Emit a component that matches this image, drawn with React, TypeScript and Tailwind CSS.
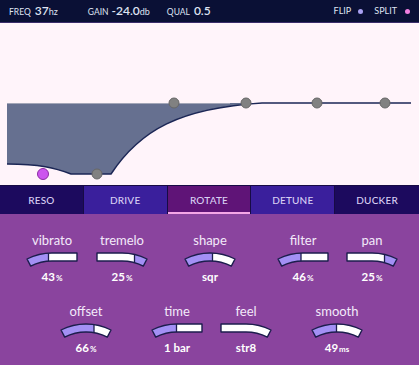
import React from "react";

type Variant = "full" | "left" | "right";

const PATHS: Record<Variant, string> = {
  full: "M1,7 A55,55 0 0 1 51,7 L47.3,14.1 A47,47 0 0 0 4.7,14.1 Z",
  left: "M1,7 A55,55 0 0 1 26,1 L51,1 L51,9 L26,9 A47,47 0 0 0 4.7,14.1 Z",
  right: "M1,1 L26,1 A55,55 0 0 1 51,7 L47.3,14.1 A47,47 0 0 0 26,9 L1,9 Z",
};

function Arc({ id, variant, pct }: { id: string; variant: Variant; pct: number }) {
  const w = pct * 50;
  const x0 = variant === "right" ? 51 - w : 1;
  const bx = variant === "right" ? 51 - w : 1 + w;
  return (
    <svg width="52" height="17" viewBox="0 0 52 17" className="block">
      <defs>
        <clipPath id={id}>
          <path d={PATHS[variant]} />
        </clipPath>
      </defs>
      <g clipPath={`url(#${id})`}>
        <rect x="0" y="0" width="52" height="17" fill="#ffffff" />
        {pct > 0 && <rect x={x0} y="0" width={w} height="17" fill="#a390f5" />}
        {pct > 0 && pct < 1 && (
          <line x1={bx} y1="0" x2={bx} y2="17" stroke="#1c1d4d" strokeWidth="1.3" />
        )}
      </g>
      <path d={PATHS[variant]} fill="none" stroke="#1c1d4d" strokeWidth="1.4" strokeLinejoin="round" />
    </svg>
  );
}

function Knob({
  id,
  label,
  value,
  unit,
  variant,
  pct,
  className,
}: {
  id: string;
  label: string;
  value: string;
  unit?: string;
  variant: Variant;
  pct: number;
  className?: string;
}) {
  return (
    <div className={`flex w-[52px] flex-col items-center ${className ?? ""}`}>
      <div className="whitespace-nowrap text-[13px] leading-[13px] text-[#f3eafa]">{label}</div>
      <div className="mt-[5px]">
        <Arc id={id} variant={variant} pct={pct} />
      </div>
      <div className="mt-[2px] whitespace-nowrap text-[11.5px] font-bold leading-[11px] text-white">
        {value}
        {unit && <span className="ml-[1px] text-[8px] font-bold">{unit}</span>}
      </div>
    </div>
  );
}

const TABS = [
  { name: "RESO", bg: "bg-[#1c0a5e]", active: false },
  { name: "DRIVE", bg: "bg-[#3a1f9c]", active: false },
  { name: "ROTATE", bg: "bg-[#5f1477]", active: true },
  { name: "DETUNE", bg: "bg-[#3a1f9c]", active: false },
  { name: "DUCKER", bg: "bg-[#1c0a5e]", active: false },
];

export default function App() {
  return (
    <div className="flex h-[365px] w-[419px] flex-col overflow-hidden bg-[#fff4fa] font-['Lato',sans-serif]">
      {/* header */}
      <div className="flex h-[23px] items-center border-b border-[#3b2d6b] bg-[#0a1035] text-[#dfe3f2]">
        <div className="ml-[9px] flex items-baseline">
          <span className="text-[8.5px]">FREQ</span>
          <span className="ml-[4px] text-[12px] font-semibold">37</span>
          <span className="text-[9px]">hz</span>
        </div>
        <div className="ml-[30px] flex items-baseline">
          <span className="text-[8.5px]">GAIN</span>
          <span className="ml-[3px] text-[12px] font-semibold">-24.0</span>
          <span className="text-[9px]">db</span>
        </div>
        <div className="ml-[17px] flex items-baseline">
          <span className="text-[8.5px]">QUAL</span>
          <span className="ml-[4px] text-[12px] font-semibold">0.5</span>
        </div>
        <div className="ml-auto mr-[9px] flex items-center">
          <span className="text-[9px]">FLIP</span>
          <span className="ml-[7px] h-[5px] w-[5px] rounded-full bg-[#a9a1f2]" />
          <span className="ml-[11px] text-[9px]">SPLIT</span>
          <span className="ml-[8px] h-[5px] w-[5px] rounded-full bg-[#f27fe0]" />
        </div>
      </div>

      {/* graph */}
      <div className="h-[162px] w-full">
        <svg width="419" height="162" viewBox="0 23 419 162" className="block">
          <path
            d="M7,103 L262,103 C180,108 140,130 111,174 L71,174 C55,168 40,164 7,164 Z"
            fill="#667090"
          />
          <line x1="7" y1="103.5" x2="230" y2="103.5" stroke="#a3a6b8" strokeWidth="1.2" />
          <path
            d="M7,164 C40,164 55,168 71,174 L111,174 C140,130 180,108 262,103 L411,103"
            fill="none"
            stroke="#1b2655"
            strokeWidth="1.5"
          />
          <circle cx="43" cy="174" r="5.5" fill="#cc55ee" stroke="#8b2ca3" strokeWidth="1" />
          <circle cx="97" cy="174" r="5" fill="#818181" stroke="#676767" strokeWidth="1" />
          <circle cx="174" cy="103" r="5" fill="#818181" stroke="#676767" strokeWidth="1" />
          <circle cx="246" cy="103" r="5" fill="#818181" stroke="#676767" strokeWidth="1" />
          <circle cx="317" cy="103" r="5" fill="#818181" stroke="#676767" strokeWidth="1" />
          <circle cx="385" cy="103" r="5" fill="#818181" stroke="#676767" strokeWidth="1" />
        </svg>
      </div>

      {/* tabs */}
      <div className="grid h-[29px] grid-cols-5 border-t border-[#170b45]">
        {TABS.map((t, i) => (
          <div
            key={t.name}
            className={`relative flex items-center justify-center text-[10px] font-medium tracking-[0.2px] text-[#d8cff3] ${t.bg} ${
              i < 4 ? "border-r border-[#170b45]" : ""
            }`}
          >
            {t.name}
            {t.active && <span className="absolute bottom-0 left-0 right-0 h-[2px] bg-[#f4a7e6]" />}
          </div>
        ))}
      </div>

      {/* knobs panel */}
      <div className="flex flex-1 flex-col bg-[#8a449e] pt-[20px]">
        <div className="flex pl-[26px]">
          <Knob id="k1" label="vibrato" value="43" unit="%" variant="left" pct={0.43} />
          <Knob id="k2" label="tremelo" value="25" unit="%" variant="right" pct={0.25} className="ml-[18px]" />
          <Knob id="k3" label="shape" value="sqr" variant="full" pct={0.55} className="ml-[36px]" />
          <Knob id="k4" label="filter" value="46" unit="%" variant="left" pct={0.46} className="ml-[41px]" />
          <Knob id="k5" label="pan" value="25" unit="%" variant="right" pct={0.25} className="ml-[17px]" />
        </div>
        <div className="mt-[21px] flex pl-[60px]">
          <Knob id="k6" label="offset" value="66" unit="%" variant="full" pct={0.66} />
          <Knob id="k7" label="time" value="1 bar" variant="left" pct={0.49} className="ml-[39px]" />
          <Knob id="k8" label="feel" value="str8" variant="right" pct={0} className="ml-[17px]" />
          <Knob id="k9" label="smooth" value="49" unit="ms" variant="full" pct={0.49} className="ml-[39px]" />
        </div>
      </div>
    </div>
  );
}
